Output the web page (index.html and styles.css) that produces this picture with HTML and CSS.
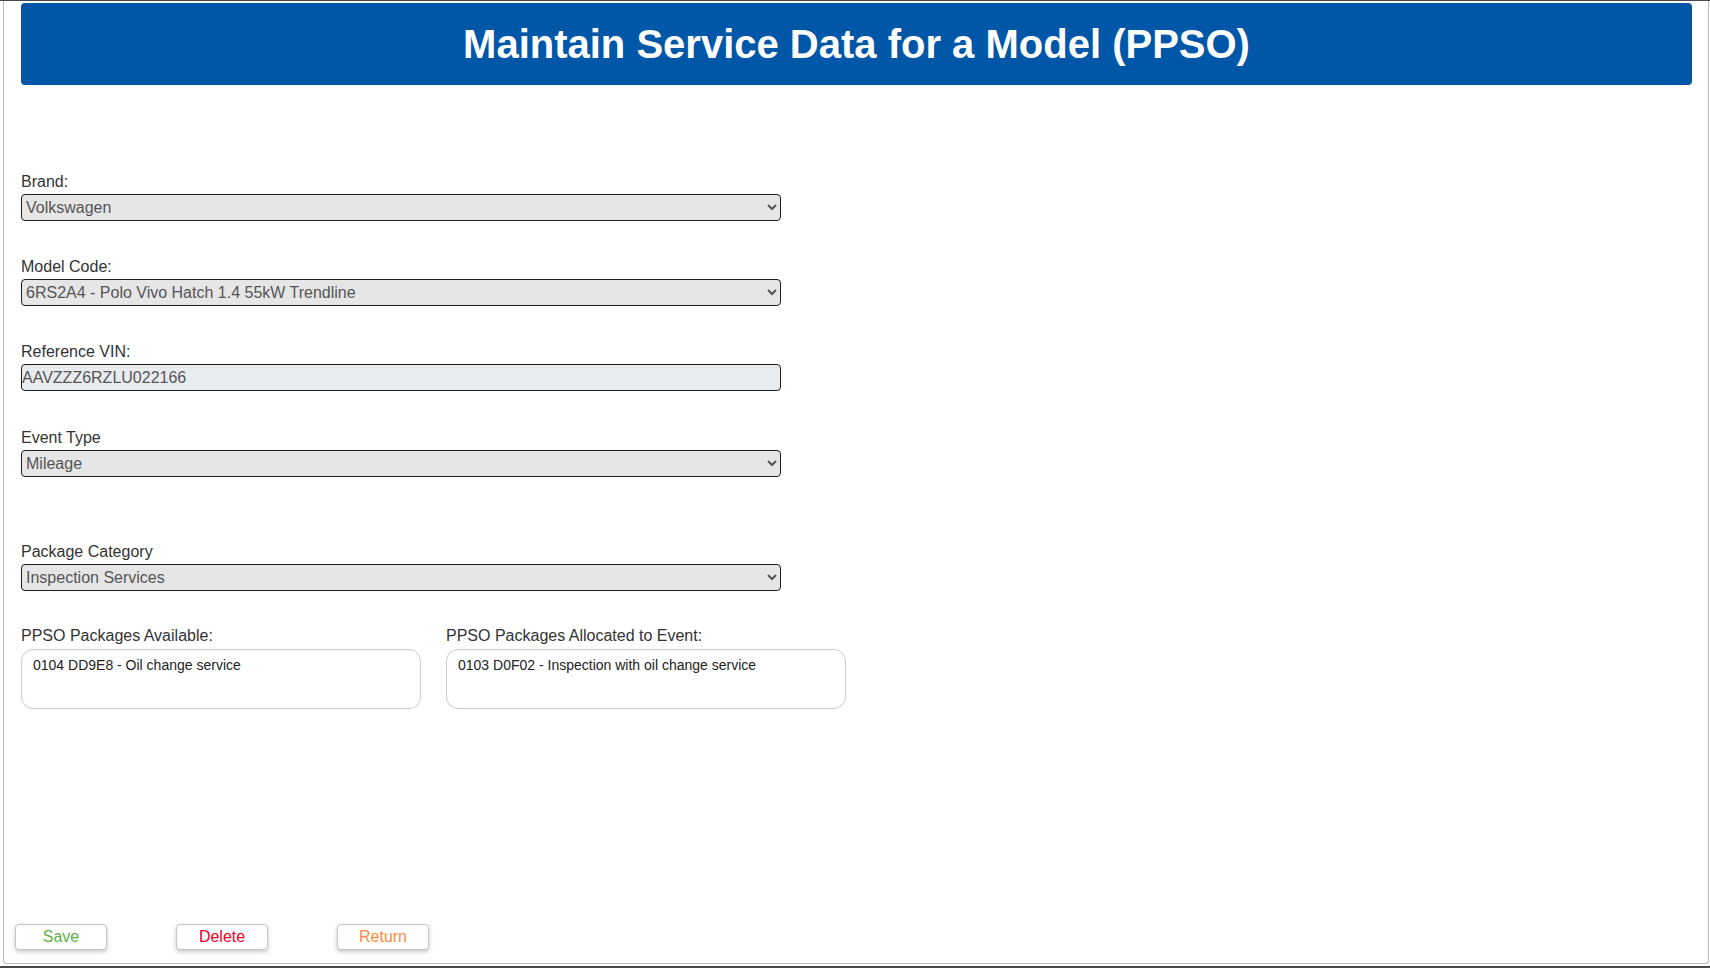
FILE: index.html
```html
<!DOCTYPE html>
<html lang="en">
<head>
<meta charset="utf-8">
<title>Maintain Service Data for a Model (PPSO)</title>
<link rel="stylesheet" href="styles.css">
</head>
<body>
<div class="topline"></div>
<div class="frame">
  <div class="content">
    <div class="banner"><h1 class="title">Maintain Service Data for a Model (PPSO)</h1></div>
    <form class="form">
      <div class="field f-brand">
        <label class="lbl" for="brand">Brand:</label>
        <select class="ctl" id="brand"><option>Volkswagen</option></select>
      </div>
      <div class="field f-model">
        <label class="lbl" for="model">Model Code:</label>
        <select class="ctl" id="model"><option>6RS2A4 - Polo Vivo Hatch 1.4 55kW Trendline</option></select>
      </div>
      <div class="field f-vin">
        <label class="lbl" for="vin">Reference VIN:</label>
        <input class="ctl vin" id="vin" type="text" value="AAVZZZ6RZLU022166" readonly>
      </div>
      <div class="field f-event">
        <label class="lbl" for="event">Event Type</label>
        <select class="ctl" id="event"><option>Mileage</option></select>
      </div>
      <div class="field f-pkg">
        <label class="lbl" for="pkg">Package Category</label>
        <select class="ctl" id="pkg"><option>Inspection Services</option></select>
      </div>
      <div class="lists">
        <div class="listcol">
          <div class="lbl lbl-list">PPSO Packages Available:</div>
          <div class="listbox"><div class="item">0104 DD9E8 - Oil change service</div></div>
        </div>
        <div class="listcol">
          <div class="lbl lbl-list">PPSO Packages Allocated to Event:</div>
          <div class="listbox"><div class="item">0103 D0F02 - Inspection with oil change service</div></div>
        </div>
      </div>
    </form>
  </div>
  <div class="actions">
    <button class="btn btn-save" type="button">Save</button>
    <button class="btn btn-delete" type="button">Delete</button>
    <button class="btn btn-return" type="button">Return</button>
  </div>
</div>
<div class="bottomline"></div>
</body>
</html>
```

FILE: styles.css
```css
html, body {
  margin: 0;
  padding: 0;
  background: #ffffff;
  font-family: "Liberation Sans", Arial, sans-serif;
}
body {
  width: 1710px;
  height: 968px;
  overflow: hidden;
}
.topline {
  height: 1px;
  background: #4a4a4a;
}
.frame {
  box-sizing: border-box;
  margin-left: 3px;
  width: 1706px;
  height: 963px;
  border: 1px solid #bdbdbd;
  border-top: none;
  border-radius: 0 0 4px 4px;
  display: flex;
  flex-direction: column;
}
.content {
  padding: 0 16px 0 17px;
}
.banner {
  margin-top: 2px;
  height: 82px;
  background: #0056a7;
  border-radius: 4px;
  display: flex;
  align-items: center;
  justify-content: center;
}
.title {
  margin: 0;
  color: #ffffff;
  font-size: 40px;
  font-weight: bold;
  line-height: 46px;
}
.form {
  padding-top: 88px;
  margin: 0;
}
.field {
  width: 760px;
}
.lbl {
  display: block;
  font-size: 16px;
  line-height: 18px;
  color: #333333;
  margin-bottom: 3px;
}
.ctl {
  display: block;
  box-sizing: border-box;
  width: 760px;
  height: 27px;
  margin: 0;
  font-family: "Liberation Sans", Arial, sans-serif;
  font-size: 16px;
  color: #555555;
  background-color: #e6e6e6;
  border: 1px solid #1e1e1e;
  border-radius: 4px;
}
.vin {
  padding: 0;
  background-color: #e9ecef;
  outline: none;
}
.f-brand { margin-bottom: 37px; }
.f-model { margin-bottom: 37px; }
.f-vin { margin-bottom: 38px; }
.f-event { margin-bottom: 66px; }
.f-pkg { margin-bottom: 36px; }
.lists {
  display: flex;
  gap: 25px;
}
.listcol {
  width: 400px;
}
.lbl-list {
  margin-bottom: 4px;
}
.listbox {
  box-sizing: border-box;
  height: 60px;
  border: 1px solid #cccccc;
  border-radius: 12px;
  padding: 7px 11px;
}
.item {
  font-size: 14px;
  line-height: 16px;
  color: #222222;
}
.actions {
  margin-top: auto;
  padding: 0 0 13px 11px;
  display: flex;
  gap: 69px;
}
.btn {
  box-sizing: border-box;
  width: 92px;
  height: 26px;
  padding: 0;
  background: #ffffff;
  border: 1px solid #c6c6c6;
  border-radius: 4px;
  box-shadow: 0 2px 4px rgba(0, 0, 0, 0.22);
  font-family: "Liberation Sans", Arial, sans-serif;
  font-size: 16px;
  cursor: pointer;
}
.btn-save { color: #5fb043; }
.btn-delete { color: #e8002b; }
.btn-return { color: #ff8a3d; }
.bottomline {
  margin-top: 2px;
  height: 2px;
  background: #4a4a4a;
}
```
